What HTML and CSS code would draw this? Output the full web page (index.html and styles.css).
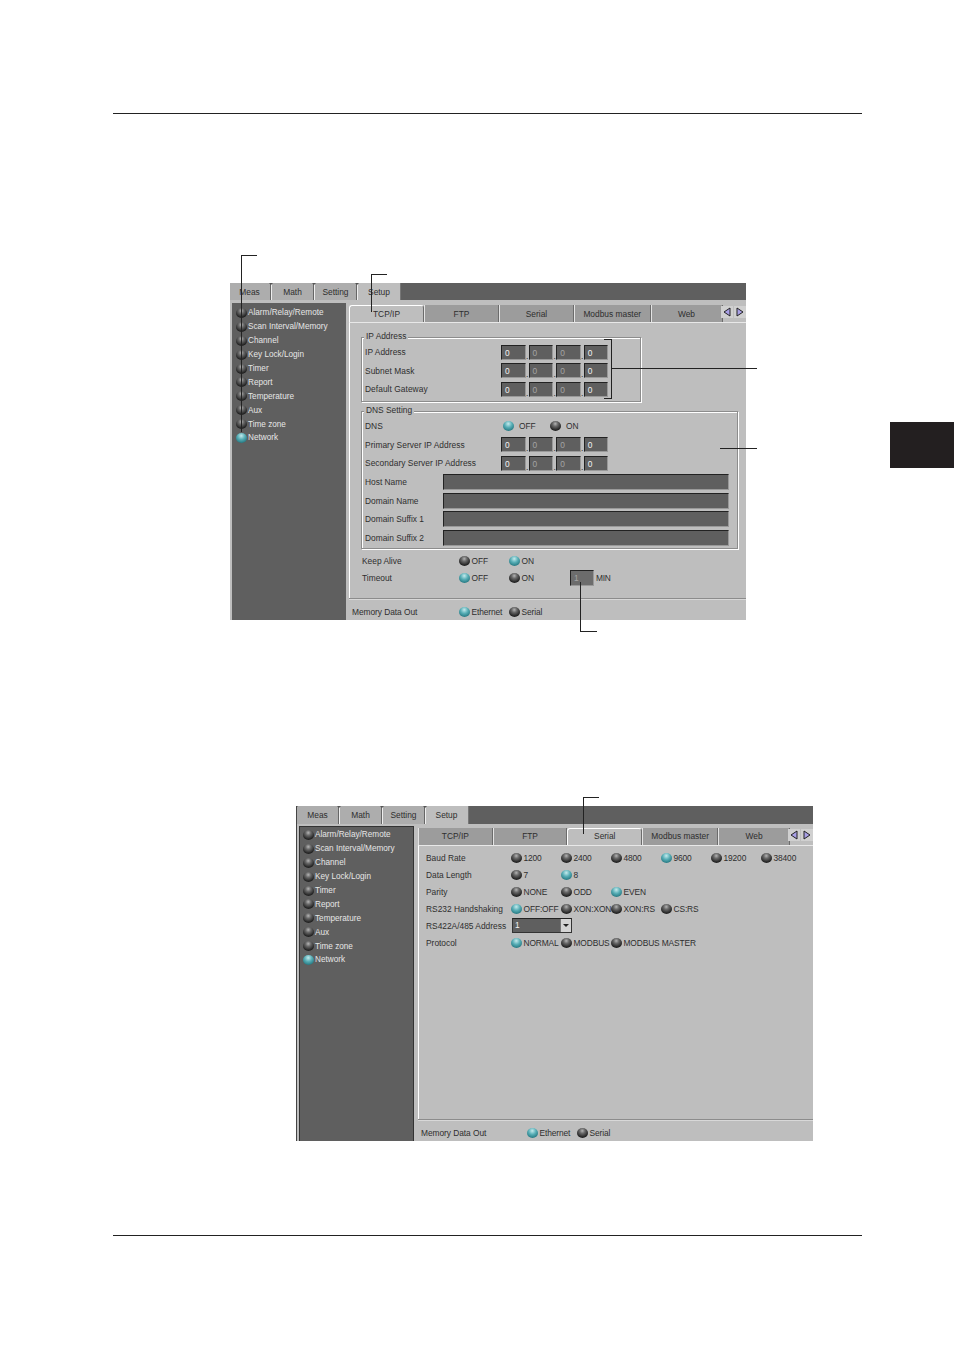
FILE: index.html
```html
<!DOCTYPE html>
<html lang="en">
<head>
  <meta charset="UTF-8" />
  <title>Network Setup</title>
  <link rel="stylesheet" href="styles.css">
</head>
<body>
<div class="page">
  <div class="side-tab"></div>
  <hr class="rule rule-top">

  <!-- first screen: TCP/IP -->
  <div class="window window-a">
    <div class="topbar">
      <span class="top-tab">Meas</span>
      <span class="top-tab">Math</span>
      <span class="top-tab">Setting</span>
      <span class="top-tab active">Setup</span>
    </div>
    <div class="window-body">
      <ul class="sidebar">
        <li><i class="led"></i>Alarm/Relay/Remote</li>
        <li><i class="led"></i>Scan Interval/Memory</li>
        <li><i class="led"></i>Channel</li>
        <li><i class="led"></i>Key Lock/Login</li>
        <li><i class="led"></i>Timer</li>
        <li><i class="led"></i>Report</li>
        <li><i class="led"></i>Temperature</li>
        <li><i class="led"></i>Aux</li>
        <li><i class="led"></i>Time zone</li>
        <li><i class="led on"></i>Network</li>
      </ul>
      <div class="main">
        <div class="subtabs">
          <span class="sub-tab active">TCP/IP</span>
          <span class="sub-tab">FTP</span>
          <span class="sub-tab">Serial</span>
          <span class="sub-tab sub-tab-modbus">Modbus master</span>
          <span class="sub-tab sub-tab-last">Web</span>
          <span class="arrows">
            <svg viewBox="0 0 12 12" class="arrow"><path d="M9 2 L3 6 L9 10 Z"/></svg>
            <svg viewBox="0 0 12 12" class="arrow"><path d="M3 2 L9 6 L3 10 Z"/></svg>
          </span>
        </div>
        <div class="panel">
          <div class="group group-ip">
            <span class="group-title">IP Address</span>
            <div class="ip-row"><span class="ip-label">IP Address</span><span class="ip"><b class="field">0</b><i class="dot">.</i><b class="field dim">0</b><i class="dot">.</i><b class="field dim">0</b><i class="dot">.</i><b class="field">0</b></span></div>
            <div class="ip-row"><span class="ip-label">Subnet Mask</span><span class="ip"><b class="field">0</b><i class="dot">.</i><b class="field dim">0</b><i class="dot">.</i><b class="field dim">0</b><i class="dot">.</i><b class="field">0</b></span></div>
            <div class="ip-row"><span class="ip-label">Default Gateway</span><span class="ip"><b class="field">0</b><i class="dot">.</i><b class="field dim">0</b><i class="dot">.</i><b class="field dim">0</b><i class="dot">.</i><b class="field">0</b></span></div>
          </div>
          <div class="group group-dns">
            <span class="group-title">DNS Setting</span>
            <div class="ip-row">
              <span class="ip-label">DNS</span>
              <span class="opt opt-dns"><i class="led on"></i>OFF</span>
              <span class="opt opt-dns"><i class="led"></i>ON</span>
            </div>
            <div class="ip-row"><span class="ip-label">Primary Server IP Address</span><span class="ip"><b class="field">0</b><i class="dot">.</i><b class="field dim">0</b><i class="dot">.</i><b class="field dim">0</b><i class="dot">.</i><b class="field">0</b></span></div>
            <div class="ip-row"><span class="ip-label">Secondary Server IP Address</span><span class="ip"><b class="field">0</b><i class="dot">.</i><b class="field dim">0</b><i class="dot">.</i><b class="field dim">0</b><i class="dot">.</i><b class="field">0</b></span></div>
            <div class="ip-row"><span class="name-label">Host Name</span><b class="field wide"></b></div>
            <div class="ip-row"><span class="name-label">Domain Name</span><b class="field wide"></b></div>
            <div class="ip-row"><span class="name-label">Domain Suffix 1</span><b class="field wide"></b></div>
            <div class="ip-row"><span class="name-label">Domain Suffix 2</span><b class="field wide"></b></div>
          </div>
          <div class="opt-rows">
            <div class="opt-row">
              <span class="opt-label">Keep Alive</span>
              <span class="opt"><i class="led"></i>OFF</span>
              <span class="opt"><i class="led on"></i>ON</span>
            </div>
            <div class="opt-row">
              <span class="opt-label">Timeout</span>
              <span class="opt"><i class="led on"></i>OFF</span>
              <span class="opt"><i class="led"></i>ON</span>
              <b class="field dim small">1</b><span class="unit">MIN</span>
            </div>
          </div>
        </div>
        <div class="bottom-bar">
          <span class="bar-label">Memory Data Out</span>
          <span class="opt"><i class="led on"></i>Ethernet</span>
          <span class="opt"><i class="led"></i>Serial</span>
        </div>
      </div>
    </div>
  </div>

  <!-- second screen: Serial -->
  <div class="window window-b">
    <div class="topbar">
      <span class="top-tab">Meas</span>
      <span class="top-tab">Math</span>
      <span class="top-tab">Setting</span>
      <span class="top-tab active">Setup</span>
    </div>
    <div class="window-body">
      <ul class="sidebar">
        <li><i class="led"></i>Alarm/Relay/Remote</li>
        <li><i class="led"></i>Scan Interval/Memory</li>
        <li><i class="led"></i>Channel</li>
        <li><i class="led"></i>Key Lock/Login</li>
        <li><i class="led"></i>Timer</li>
        <li><i class="led"></i>Report</li>
        <li><i class="led"></i>Temperature</li>
        <li><i class="led"></i>Aux</li>
        <li><i class="led"></i>Time zone</li>
        <li><i class="led on"></i>Network</li>
      </ul>
      <div class="main">
        <div class="subtabs">
          <span class="sub-tab">TCP/IP</span>
          <span class="sub-tab">FTP</span>
          <span class="sub-tab active">Serial</span>
          <span class="sub-tab sub-tab-modbus">Modbus master</span>
          <span class="sub-tab sub-tab-last">Web</span>
          <span class="arrows">
            <svg viewBox="0 0 12 12" class="arrow"><path d="M9 2 L3 6 L9 10 Z"/></svg>
            <svg viewBox="0 0 12 12" class="arrow"><path d="M3 2 L9 6 L3 10 Z"/></svg>
          </span>
        </div>
        <div class="panel panel-serial">
          <div class="opt-row">
            <span class="serial-label">Baud Rate</span>
            <span class="opt"><i class="led"></i>1200</span>
            <span class="opt"><i class="led"></i>2400</span>
            <span class="opt"><i class="led"></i>4800</span>
            <span class="opt"><i class="led on"></i>9600</span>
            <span class="opt"><i class="led"></i>19200</span>
            <span class="opt"><i class="led"></i>38400</span>
          </div>
          <div class="opt-row">
            <span class="serial-label">Data Length</span>
            <span class="opt"><i class="led"></i>7</span>
            <span class="opt"><i class="led on"></i>8</span>
          </div>
          <div class="opt-row">
            <span class="serial-label">Parity</span>
            <span class="opt"><i class="led"></i>NONE</span>
            <span class="opt"><i class="led"></i>ODD</span>
            <span class="opt"><i class="led on"></i>EVEN</span>
          </div>
          <div class="opt-row">
            <span class="serial-label">RS232 Handshaking</span>
            <span class="opt"><i class="led on"></i>OFF:OFF</span>
            <span class="opt"><i class="led"></i>XON:XON</span>
            <span class="opt"><i class="led"></i>XON:RS</span>
            <span class="opt"><i class="led"></i>CS:RS</span>
          </div>
          <div class="opt-row">
            <span class="serial-label">RS422A/485 Address</span>
            <span class="combo"><b class="field combo-text">1</b><span class="combo-btn"></span></span>
          </div>
          <div class="opt-row">
            <span class="serial-label">Protocol</span>
            <span class="opt"><i class="led on"></i>NORMAL</span>
            <span class="opt"><i class="led"></i>MODBUS</span>
            <span class="opt"><i class="led"></i>MODBUS MASTER</span>
          </div>
        </div>
        <div class="bottom-bar">
          <span class="bar-label">Memory Data Out</span>
          <span class="opt"><i class="led on"></i>Ethernet</span>
          <span class="opt"><i class="led"></i>Serial</span>
        </div>
      </div>
    </div>
  </div>

  <hr class="rule rule-bottom">

  <!-- leader lines over the screens -->
  <span class="leader lead-side"></span>
  <span class="leader lead-tab"></span>
  <span class="leader lead-bracket"></span>
  <span class="leader-h lead-ip"></span>
  <span class="leader-h lead-dns"></span>
  <span class="leader lead-min"></span>
  <span class="leader lead-serial"></span>
</div>
</body>
</html>
```

FILE: styles.css
```css
:root {
  --panel: #bebebe;
  --dark: #5f5f5f;
  --tab: #9c9c9c;
  --text: #2e2e2e;
}

* {
  box-sizing: border-box;
}

body {
  margin: 0;
  background: #fff;
  font-family: "Liberation Sans", Arial, sans-serif;
  font-size: 8.4px;
  color: var(--text);
}

.page {
  position: relative;
  width: 954px;
  height: 1350px;
  overflow: hidden;
  padding-top: 113px;
}

.rule {
  margin: 0 0 0 113px;
  width: 749px;
  height: 1px;
  border: 0;
  background: #222;
}

.rule-bottom {
  margin-top: 94px;
}

.side-tab {
  position: absolute;
  left: 890px;
  top: 422px;
  width: 64px;
  height: 46px;
  background: #231f20;
}

/* screens */
.window {
  display: flex;
  flex-direction: column;
  background: var(--panel);
  overflow: hidden;
}

.window-a {
  width: 516px;
  height: 337px;
  margin: 169px 0 0 230px;
}

.window-b {
  width: 517px;
  height: 335px;
  margin: 186px 0 0 296px;
  border-left: 1px solid #444;
}

.topbar {
  display: flex;
  height: 17px;
  flex: none;
  margin-left: -2px;
  background: var(--dark);
}

.window-b .topbar {
  height: 18px;
  margin-left: -1px;
}

.top-tab {
  position: relative;
  width: 43px;
  background: #adadad;
  border-left: 1px solid #eee;
  border-right: 1px solid #666;
  text-align: center;
  line-height: 18px;
}

.top-tab::before {
  content: "";
  position: absolute;
  top: 0;
  left: -3px;
  border: 2px solid transparent;
  border-top-color: #555;
}

.top-tab.active {
  background: var(--panel);
  border-right: 1px solid #777;
  width: 44px;
}

.window-b .top-tab.active {
  padding-right: 1px;
}

.window-body {
  display: flex;
  flex: 1;
  min-height: 0;
  padding-top: 3px;
}

.window-b .window-body {
  padding-top: 2px;
}

.sidebar {
  width: 114px;
  margin: 0 0 0 2px;
  padding: 3px 0 0 4px;
  list-style: none;
  background: var(--dark);
  color: #e6e6e6;
  font-size: 8.2px;
  flex: none;
}

.window-b .sidebar {
  width: 115px;
  border: 1px solid #333;
  border-bottom: 0;
  padding: 1px 0 0 3px;
}

.sidebar li {
  display: flex;
  align-items: center;
  height: 13.9px;
  gap: 1px;
}

.led {
  display: inline-block;
  flex: none;
  width: 11px;
  height: 10px;
  border-radius: 50%;
  background: radial-gradient(circle at 48% 28%, #b4b4b4 0, #6a6a6a 28%, #262626 68%, #0c0c0c 100%);
}

.led.on {
  background: radial-gradient(circle at 48% 28%, #c4eaec 0, #58aeb6 40%, #2a7d86 75%, #185a62 100%);
}

.main {
  display: flex;
  flex-direction: column;
  flex: 1;
  min-width: 0;
  padding: 2px 0 0 1px;
}

.window-b .main {
  padding-left: 2px;
}

.subtabs {
  display: flex;
  height: 17px;
  flex: none;
  padding-left: 2px;
}

.sub-tab {
  width: 75px;
  background: var(--tab);
  border-left: 1px solid #e4e4e4;
  border-right: 1px solid #6c6c6c;
  text-align: center;
  line-height: 18px;
}

.window-b .sub-tab {
  line-height: 16px;
}

.sub-tab.active {
  background: var(--panel);
  border-top: 1px solid #fff;
  border-left: 1px solid #fff;
  border-radius: 3px 3px 0 0;
  line-height: 17px;
}

.window-b .sub-tab.active {
  line-height: 15px;
}

.sub-tab-modbus {
  width: 76.5px;
}

.sub-tab-last {
  width: 72px;
}

.arrows {
  display: flex;
  gap: 1px;
  margin: 1px 0 0 -2px;
}

.arrow {
  width: 12px;
  height: 12px;
  background: #d0d0d0;
}

.arrow path {
  fill: #a9a0e6;
  stroke: #222;
  stroke-width: 1;
}

.panel {
  flex: 1;
  margin-left: 2px;
  padding-left: 11px;
  border-left: 1px solid #fff;
  border-top: 1px solid #e8e8e8;
}

.group {
  position: relative;
  border: 1px solid #8c8c8c;
  box-shadow: 1px 1px 0 #fff, inset 1px 1px 0 #fff;
}

.group-title {
  position: absolute;
  top: -7px;
  left: 2px;
  padding: 0 2px;
  background: var(--panel);
  line-height: 10px;
}

.group-ip {
  width: 280px;
  height: 65px;
  margin-top: 14px;
  padding: 5px 0 0 3px;
}

.group-dns {
  width: 377px;
  height: 138px;
  margin-top: 9px;
  padding: 4.7px 0 0 3px;
}

.group-dns .ip-row {
  height: 18.67px;
}

.ip-row {
  display: flex;
  align-items: center;
  height: 18.5px;
}

.ip-label {
  width: 136px;
  flex: none;
  letter-spacing: 0.05px;
}

.opt.opt-dns {
  width: 46px;
  margin-left: 2px;
  margin-right: -1px;
  gap: 5px;
}

.name-label {
  width: 78px;
  flex: none;
}

.ip {
  display: flex;
  align-items: flex-end;
}

.field {
  display: block;
  width: 24.6px;
  height: 15px;
  padding-left: 3px;
  background: var(--dark);
  border-top: 1px solid #222;
  border-left: 1px solid #222;
  border-right: 1px solid #999;
  border-bottom: 1px solid #999;
  color: #f2f2f2;
  font-weight: normal;
  line-height: 14px;
}

.field.dim {
  color: #a4a4a4;
}

.field.wide {
  width: 286px;
  height: 16px;
}

.field.small {
  width: 24px;
  height: 16px;
  margin-left: 11px;
  background: #6c6c6c;
}

.dot {
  width: 3px;
  text-align: center;
  font-style: normal;
  line-height: 8px;
}

.unit {
  margin-left: 2px;
  letter-spacing: -0.3px;
}

.opt-rows {
  margin-top: 3px;
  padding-left: 1px;
}

.opt-row {
  display: flex;
  align-items: center;
  height: 17px;
}

.opt-label {
  width: 97px;
  flex: none;
}

.opt {
  display: flex;
  align-items: center;
  gap: 1.5px;
  width: 50px;
  flex: none;
  letter-spacing: -0.12px;
  white-space: nowrap;
}

.bottom-bar {
  display: flex;
  align-items: center;
  flex: none;
  height: 22px;
  margin-left: 2px;
  padding: 5px 0 0 3px;
  border-top: 1px solid #8c8c8c;
  box-shadow: inset 0 1px 0 #d8d8d8;
}

.bar-label {
  width: 107px;
  flex: none;
  letter-spacing: -0.05px;
}

.window-b .bar-label {
  width: 106px;
}

/* serial panel */
.panel-serial {
  padding: 3px 0 0 7px;
}

.serial-label {
  width: 85px;
  flex: none;
  white-space: nowrap;
}

.combo {
  display: flex;
  width: 60px;
  height: 15px;
  margin-left: 1px;
  border: 1px solid #333;
  border-top-color: #222;
}

.combo-text {
  flex: 1;
  height: 13px;
  border: 0;
  line-height: 13px;
  padding-left: 2px;
}

.combo-btn {
  position: relative;
  width: 11px;
  background: #d4d4d4;
  border-left: 1px solid #777;
}

.combo-btn::after {
  content: "";
  position: absolute;
  left: 2px;
  top: 5px;
  border: 3px solid transparent;
  border-top-color: #222;
}

/* leader lines */
.leader {
  position: absolute;
  border-left: 1px solid #222;
}

.leader-h {
  position: absolute;
  height: 1px;
  background: #222;
}

.lead-side {
  left: 241px;
  top: 255px;
  width: 16px;
  height: 177px;
  border-top: 1px solid #222;
}

.lead-tab {
  left: 371px;
  top: 274px;
  width: 16px;
  height: 38px;
  border-top: 1px solid #222;
}

.lead-bracket {
  left: 604px;
  top: 339px;
  width: 8px;
  height: 60px;
  border: 1px solid #222;
  border-left: 0;
}

.lead-ip {
  left: 611px;
  top: 368px;
  width: 146px;
}

.lead-dns {
  left: 720px;
  top: 448px;
  width: 37px;
}

.lead-min {
  left: 580px;
  top: 582px;
  width: 17px;
  height: 50px;
  border-bottom: 1px solid #222;
}

.lead-serial {
  left: 583px;
  top: 797px;
  width: 16px;
  height: 37px;
  border-top: 1px solid #222;
}
```
